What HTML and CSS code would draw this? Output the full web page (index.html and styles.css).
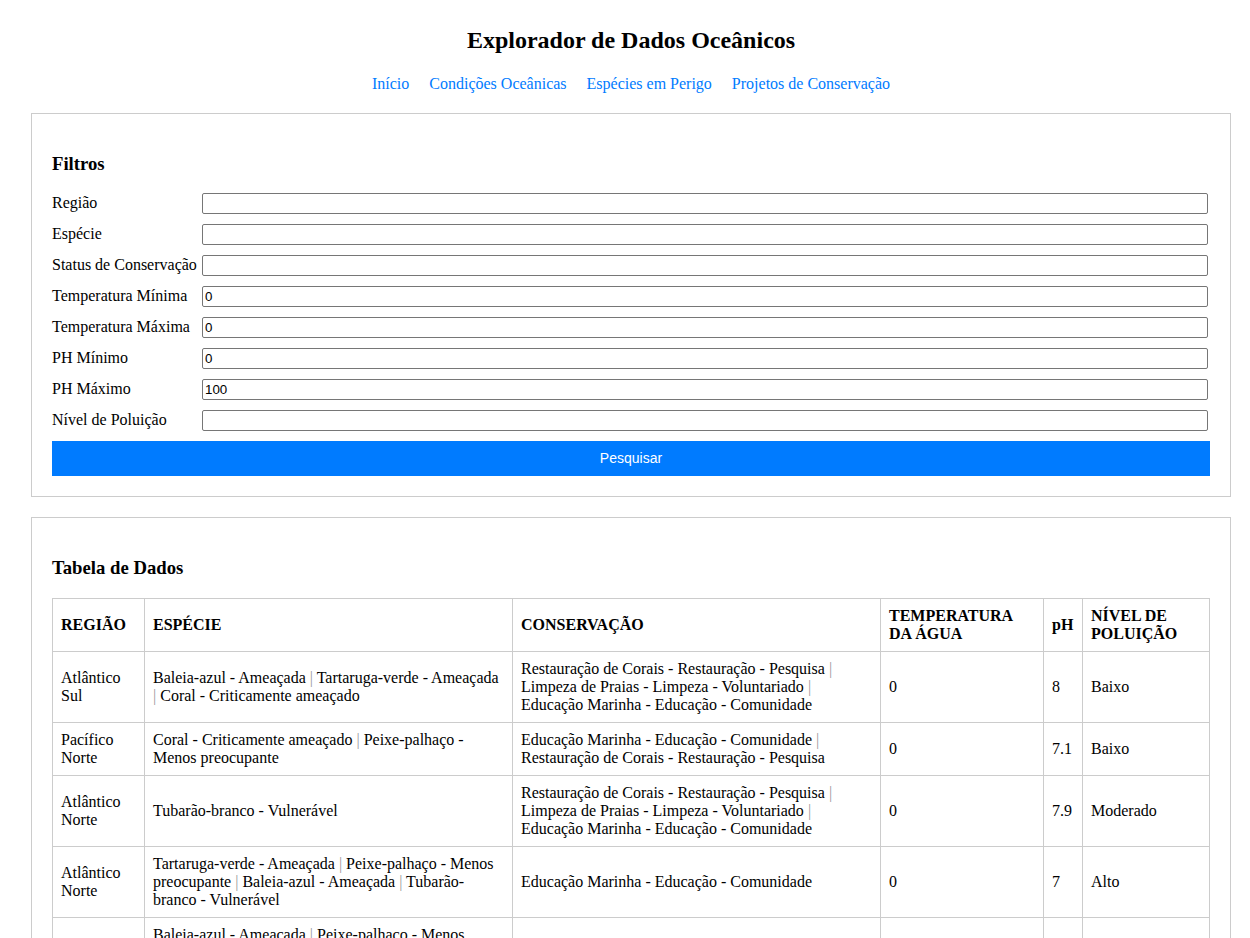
FILE: index.html
```html
<!DOCTYPE html>
<html lang="pt">
<head>
<meta charset="utf-8">
<title>Explorador de Dados Oceânicos</title>
<link rel="stylesheet" href="styles.css">
</head>
<body>
<header class="header">
  <h1 class="title">Explorador de Dados Oceânicos</h1>
  <nav class="nav">
    <a href="#">Início</a>
    <a href="#">Condições Oceânicas</a>
    <a href="#">Espécies em Perigo</a>
    <a href="#">Projetos de Conservação</a>
  </nav>
</header>
<main class="main">
  <section class="card">
    <h3 class="card-title">Filtros</h3>
    <form class="filters">
      <div class="row"><label>Região</label><input type="text"></div>
      <div class="row"><label>Espécie</label><input type="text"></div>
      <div class="row"><label>Status de Conservação</label><input type="text"></div>
      <div class="row"><label>Temperatura Mínima</label><input type="number" value="0"></div>
      <div class="row"><label>Temperatura Máxima</label><input type="number" value="0"></div>
      <div class="row"><label>PH Mínimo</label><input type="number" value="0"></div>
      <div class="row"><label>PH Máximo</label><input type="number" value="100"></div>
      <div class="row"><label>Nível de Poluição</label><input type="text"></div>
      <button type="button" class="btn">Pesquisar</button>
    </form>
  </section>
  <section class="card">
    <h3 class="card-title card-title-table">Tabela de Dados</h3>
    <table class="data">
      <thead>
        <tr>
          <th class="c1">Região</th>
          <th class="c2">Espécie</th>
          <th class="c3">Conservação</th>
          <th class="c4">Temperatura da Água</th>
          <th class="c5 nocase">pH</th>
          <th class="c6">Nível de Poluição</th>
        </tr>
      </thead>
      <tbody>
        <tr>
          <td>Atlântico Sul</td>
          <td>Baleia-azul - Ameaçada <span class="sep">|</span> Tartaruga-verde - Ameaçada <span class="sep">|</span> Coral - Criticamente ameaçado</td>
          <td>Restauração de Corais - Restauração - Pesquisa <span class="sep">|</span> Limpeza de Praias - Limpeza - Voluntariado <span class="sep">|</span> Educação Marinha - Educação - Comunidade</td>
          <td>0</td>
          <td>8</td>
          <td>Baixo</td>
        </tr>
        <tr>
          <td>Pacífico Norte</td>
          <td>Coral - Criticamente ameaçado <span class="sep">|</span> Peixe-palhaço - Menos preocupante</td>
          <td>Educação Marinha - Educação - Comunidade <span class="sep">|</span> Restauração de Corais - Restauração - Pesquisa</td>
          <td>0</td>
          <td>7.1</td>
          <td>Baixo</td>
        </tr>
        <tr>
          <td>Atlântico Norte</td>
          <td>Tubarão-branco - Vulnerável</td>
          <td>Restauração de Corais - Restauração - Pesquisa <span class="sep">|</span> Limpeza de Praias - Limpeza - Voluntariado <span class="sep">|</span> Educação Marinha - Educação - Comunidade</td>
          <td>0</td>
          <td>7.9</td>
          <td>Moderado</td>
        </tr>
        <tr>
          <td>Atlântico Norte</td>
          <td>Tartaruga-verde - Ameaçada <span class="sep">|</span> Peixe-palhaço - Menos preocupante <span class="sep">|</span> Baleia-azul - Ameaçada <span class="sep">|</span> Tubarão-branco - Vulnerável</td>
          <td>Educação Marinha - Educação - Comunidade</td>
          <td>0</td>
          <td>7</td>
          <td>Alto</td>
        </tr>
        <tr>
          <td>Pacífico Sul</td>
          <td>Baleia-azul - Ameaçada <span class="sep">|</span> Peixe-palhaço - Menos preocupante <span class="sep">|</span> Coral - Criticamente ameaçado <span class="sep">|</span> Tartaruga-verde - Ameaçada <span class="sep">|</span> Tubarão-branco - Vulnerável</td>
          <td>Limpeza de Praias - Limpeza - Voluntariado</td>
          <td>0</td>
          <td>8.1</td>
          <td>Baixo</td>
        </tr>
      </tbody>
    </table>
  </section>
</main>
</body>
</html>
```

FILE: styles.css
```css
html, body {
  margin: 0;
  padding: 0;
  background: #fff;
}
body {
  font-family: "Liberation Serif", "Times New Roman", serif;
  font-size: 16px;
  color: #000;
  padding: 0 19px 40px 31px;
}
.header {
  padding-top: 26px;
  text-align: center;
}
.title {
  margin: 0;
  font-size: 24px;
  font-weight: bold;
  line-height: 28px;
}
.nav {
  margin-top: 21px;
  display: flex;
  justify-content: center;
  gap: 20px;
  font-size: 16px;
  line-height: 18px;
}
.nav a {
  color: #007bff;
  text-decoration: none;
}
.main {
  margin-top: 20px;
  display: flex;
  flex-direction: column;
  gap: 20px;
}
.card {
  border: 1px solid #ccc;
  padding: 20px;
  width: 1158px;
}
.card-title {
  margin: 18.72px 0;
  font-size: 18.72px;
  line-height: 21.5px;
  font-weight: bold;
}
.card-title-table {
  margin-bottom: 19.72px;
}
.filters {
  display: flex;
  flex-direction: column;
}
.row {
  display: flex;
  align-items: center;
  height: 21px;
  margin-bottom: 10px;
}
.row label {
  width: 150px;
  flex: none;
  font-size: 16px;
}
.row input {
  flex: 1;
  margin-right: 2px;
  height: 21px;
  box-sizing: border-box;
  border: 1px solid #767676;
  border-radius: 2px;
  padding: 1px 2px;
  font-family: "Liberation Sans", Arial, sans-serif;
  font-size: 13.33px;
  color: #000;
  background: #fff;
  -moz-appearance: textfield;
}
.row input::-webkit-outer-spin-button,
.row input::-webkit-inner-spin-button {
  -webkit-appearance: none;
  margin: 0;
}
.btn {
  height: 35px;
  border: none;
  background: #007bff;
  color: #fff;
  font-family: "Liberation Sans", Arial, sans-serif;
  font-size: 14px;
  padding: 0;
  cursor: pointer;
}
.data {
  width: 100%;
  border-collapse: collapse;
  table-layout: fixed;
}
.data th, .data td {
  border: 1px solid #ccc;
  padding: 8px;
  text-align: left;
  vertical-align: middle;
  line-height: 18px;
}
.data th {
  text-transform: uppercase;
  font-weight: bold;
}
.data th.nocase {
  text-transform: none;
}
.c1 { width: 75px; }
.c2 { width: 351px; }
.c3 { width: 351px; }
.c4 { width: 146px; }
.c5 { width: 22px; }
.c6 { width: 110px; }
.sep {
  color: #999;
}
```
